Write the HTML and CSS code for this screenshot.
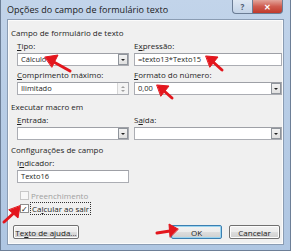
FILE: index.html
```html
<!DOCTYPE html>
<html lang="pt">
<head>
  <meta charset="UTF-8" />
  <title>Opções do campo de formulário texto</title>
  <link rel="stylesheet" href="styles.css">
</head>
<body>
  <div class="window">
    <div class="titlebar">
      <span class="title">Opções do campo de formulário texto</span>
      <div class="caption">
        <span class="cap-btn help">?</span>
        <span class="cap-btn close">✕</span>
      </div>
    </div>

    <div class="client">
      <div class="heading">Campo de formulário de texto</div>
      <div class="cols">
        <div class="field">
          <label><u>T</u>ipo:</label>
          <div class="box">Cálculo<span class="drop"><i></i></span></div>
        </div>
        <div class="field">
          <label>E<u>x</u>pressão:</label>
          <div class="box">=texto13*Texto15</div>
        </div>
        <div class="field">
          <label><u>C</u>omprimento máximo:</label>
          <div class="box disabled">Ilimitado<span class="spin"><i class="up"></i><i class="down"></i></span></div>
        </div>
        <div class="field">
          <label><u>F</u>ormato do número:</label>
          <div class="box">0,00<span class="drop"><i></i></span></div>
        </div>
      </div>

      <div class="heading">Executar macro em</div>
      <div class="cols">
        <div class="field">
          <label><u>E</u>ntrada:</label>
          <div class="box"><span class="drop"><i></i></span></div>
        </div>
        <div class="field">
          <label>S<u>a</u>ída:</label>
          <div class="box"><span class="drop"><i></i></span></div>
        </div>
      </div>

      <div class="heading tight">Configurações de campo</div>
      <div class="cols">
        <div class="field">
          <label>I<u>n</u>dicador:</label>
          <div class="box">Texto16</div>
        </div>
      </div>

      <div class="check disabled"><span class="cb"></span>Preenchimento</div>
      <div class="check"><span class="cb checked">✓</span><span class="focus">Ca<u>l</u>cular ao sair</span></div>

      <div class="buttons">
        <button class="btn wide">Te<u>x</u>to de ajuda...</button>
        <div class="right">
          <button class="btn default">OK</button>
          <button class="btn">Cancelar</button>
        </div>
      </div>
    </div>
  </div>

  <svg class="arrows" width="291" height="251" viewBox="0 0 291 251">
    <g fill="#e3161d" stroke="#e3161d" stroke-width="3" stroke-linecap="round">
      <line x1="70" y1="71" x2="52" y2="61"/>
      <polygon points="45,57 58,55 52,67" stroke-width="1"/>
      <line x1="222" y1="70" x2="212" y2="61"/>
      <polygon points="206,56 218,57 210,67" stroke-width="1"/>
      <line x1="172" y1="98" x2="163" y2="90"/>
      <polygon points="157,85 169,86 161,96" stroke-width="1"/>
      <line x1="4" y1="222" x2="15" y2="212"/>
      <polygon points="20,206 18,218 9,210" stroke-width="1"/>
      <line x1="157" y1="233" x2="170" y2="231"/>
      <polygon points="178,229 169,224 170,237" stroke-width="1"/>
    </g>
  </svg>
</body>
</html>
```

FILE: styles.css
```css
html, body { margin: 0; padding: 0; }
body {
  width: 291px; height: 251px; overflow: hidden;
  font-family: "Open Sans", "Noto Sans", sans-serif;
  font-size: 8px; color: #1e1e1e;
  position: relative;
}
.window {
  width: 291px; height: 251px; box-sizing: border-box;
  background: linear-gradient(#c2d4ea, #b8cde6 40%, #afc6e2);
  border: 1px solid #6d7f97; border-top: none;
  display: flex; flex-direction: column;
  padding: 0 6px 5px 6px;
}
.titlebar {
  height: 19px; flex: 0 0 auto;
  display: flex; align-items: flex-start; justify-content: space-between;
}
.title {
  font-size: 9px; color: #1a1a1a; margin-top: 3px;
  letter-spacing: 0.05px;
}
.caption { display: flex; margin-right: 1px; }
.cap-btn {
  height: 13px; display: flex; align-items: center; justify-content: center;
  border: 1px solid #6b7d95; border-top: none;
  color: #fff; font-weight: bold;
}
.help {
  width: 19px; border-radius: 0 0 0 4px; border-right: none;
  background: linear-gradient(#dfe8f3, #c3d3e7);
  color: #4b5a70; font-size: 8px;
}
.close {
  width: 29px; border-radius: 0 0 4px 0;
  background: linear-gradient(#e3a59b, #cf5c4f 50%, #c0392b);
  font-size: 8px;
}
.client {
  flex: 1 1 auto;
  background: #f0f0f0;
  border: 1px solid #8a9cb3;
  box-shadow: inset 0 0 0 1px #fbfbfb;
  padding: 7px 3px 0 3px;
  display: flex; flex-direction: column;
}
.heading { height: 12px; line-height: 12px; margin-top: 0; }
.cols {
  display: grid; grid-template-columns: 112px 148px;
  column-gap: 5px; row-gap: 0;
  padding-left: 6px;
}
.field { display: flex; flex-direction: column; }
.field label { height: 12px; line-height: 12px; margin-top: 1px; }
u { text-decoration: underline; text-underline-offset: 1px; }
.box {
  height: 13px; box-sizing: border-box; margin-top: 1px; margin-bottom: 2px;
  background: #fff; border: 1px solid #abadb3; border-top-color: #9ea0a6;
  padding-left: 3px; line-height: 11px; font-size: 7.5px;
  display: flex; align-items: center; justify-content: space-between;
}
.drop, .spin {
  width: 10px; height: 11px;
  background: linear-gradient(#f2f2f2, #e0e0e0);
  display: flex; align-items: center; justify-content: center;
  margin-left: auto;
}
.drop { border: 1px solid #8f949b; height: 9px; width: 8px; }
.drop i {
  width: 0; height: 0;
  border-left: 2px solid transparent; border-right: 2px solid transparent;
  border-top: 2px solid #222;
}
.spin { flex-direction: column; background: #f4f4f4; border-left: 1px solid #d6d6d6; }
.spin i { width: 0; height: 0; border-left: 2px solid transparent; border-right: 2px solid transparent; margin: 1px 0; }
.spin .up { border-bottom: 2px solid #a0a0a0; }
.spin .down { border-top: 2px solid #a0a0a0; }
.cols + .heading { margin-top: 4px; }
.cols + .heading.tight { margin-top: 2px; }
.check {
  display: flex; align-items: center; height: 13px;
  padding-left: 9px;
}
.check.disabled { color: #a0a0a0; margin-top: 4px; }
.cb {
  width: 9px; height: 9px; box-sizing: border-box;
  border: 1px solid #8f8f8f; background: #fff; margin-right: 2px;
  font-size: 8px; line-height: 7px; text-align: center; color: #222;
}
.check.disabled .cb { border-color: #c8c8c8; background: #f7f7f7; }
.focus { outline: 1px dotted #333; padding: 0 1px; }
.buttons {
  display: flex; justify-content: space-between; align-items: center;
  margin-top: 10px; padding-left: 2px;
}
.right { display: flex; gap: 7px; }
.btn {
  font: inherit; color: #1e1e1e;
  height: 14px; width: 51px; padding: 0;
  border: 1px solid #707070; border-radius: 2px;
  background: linear-gradient(#f2f2f2 0%, #ebebeb 50%, #dddddd 51%, #cfcfcf 100%);
  box-shadow: inset 0 0 0 1px #fcfcfc;
}
.btn.wide { width: 66px; }
.btn.default { border-color: #3c7fb1; box-shadow: inset 0 0 0 1px #9ad4f0; }
.arrows { position: absolute; left: 0; top: 0; pointer-events: none; }
```
